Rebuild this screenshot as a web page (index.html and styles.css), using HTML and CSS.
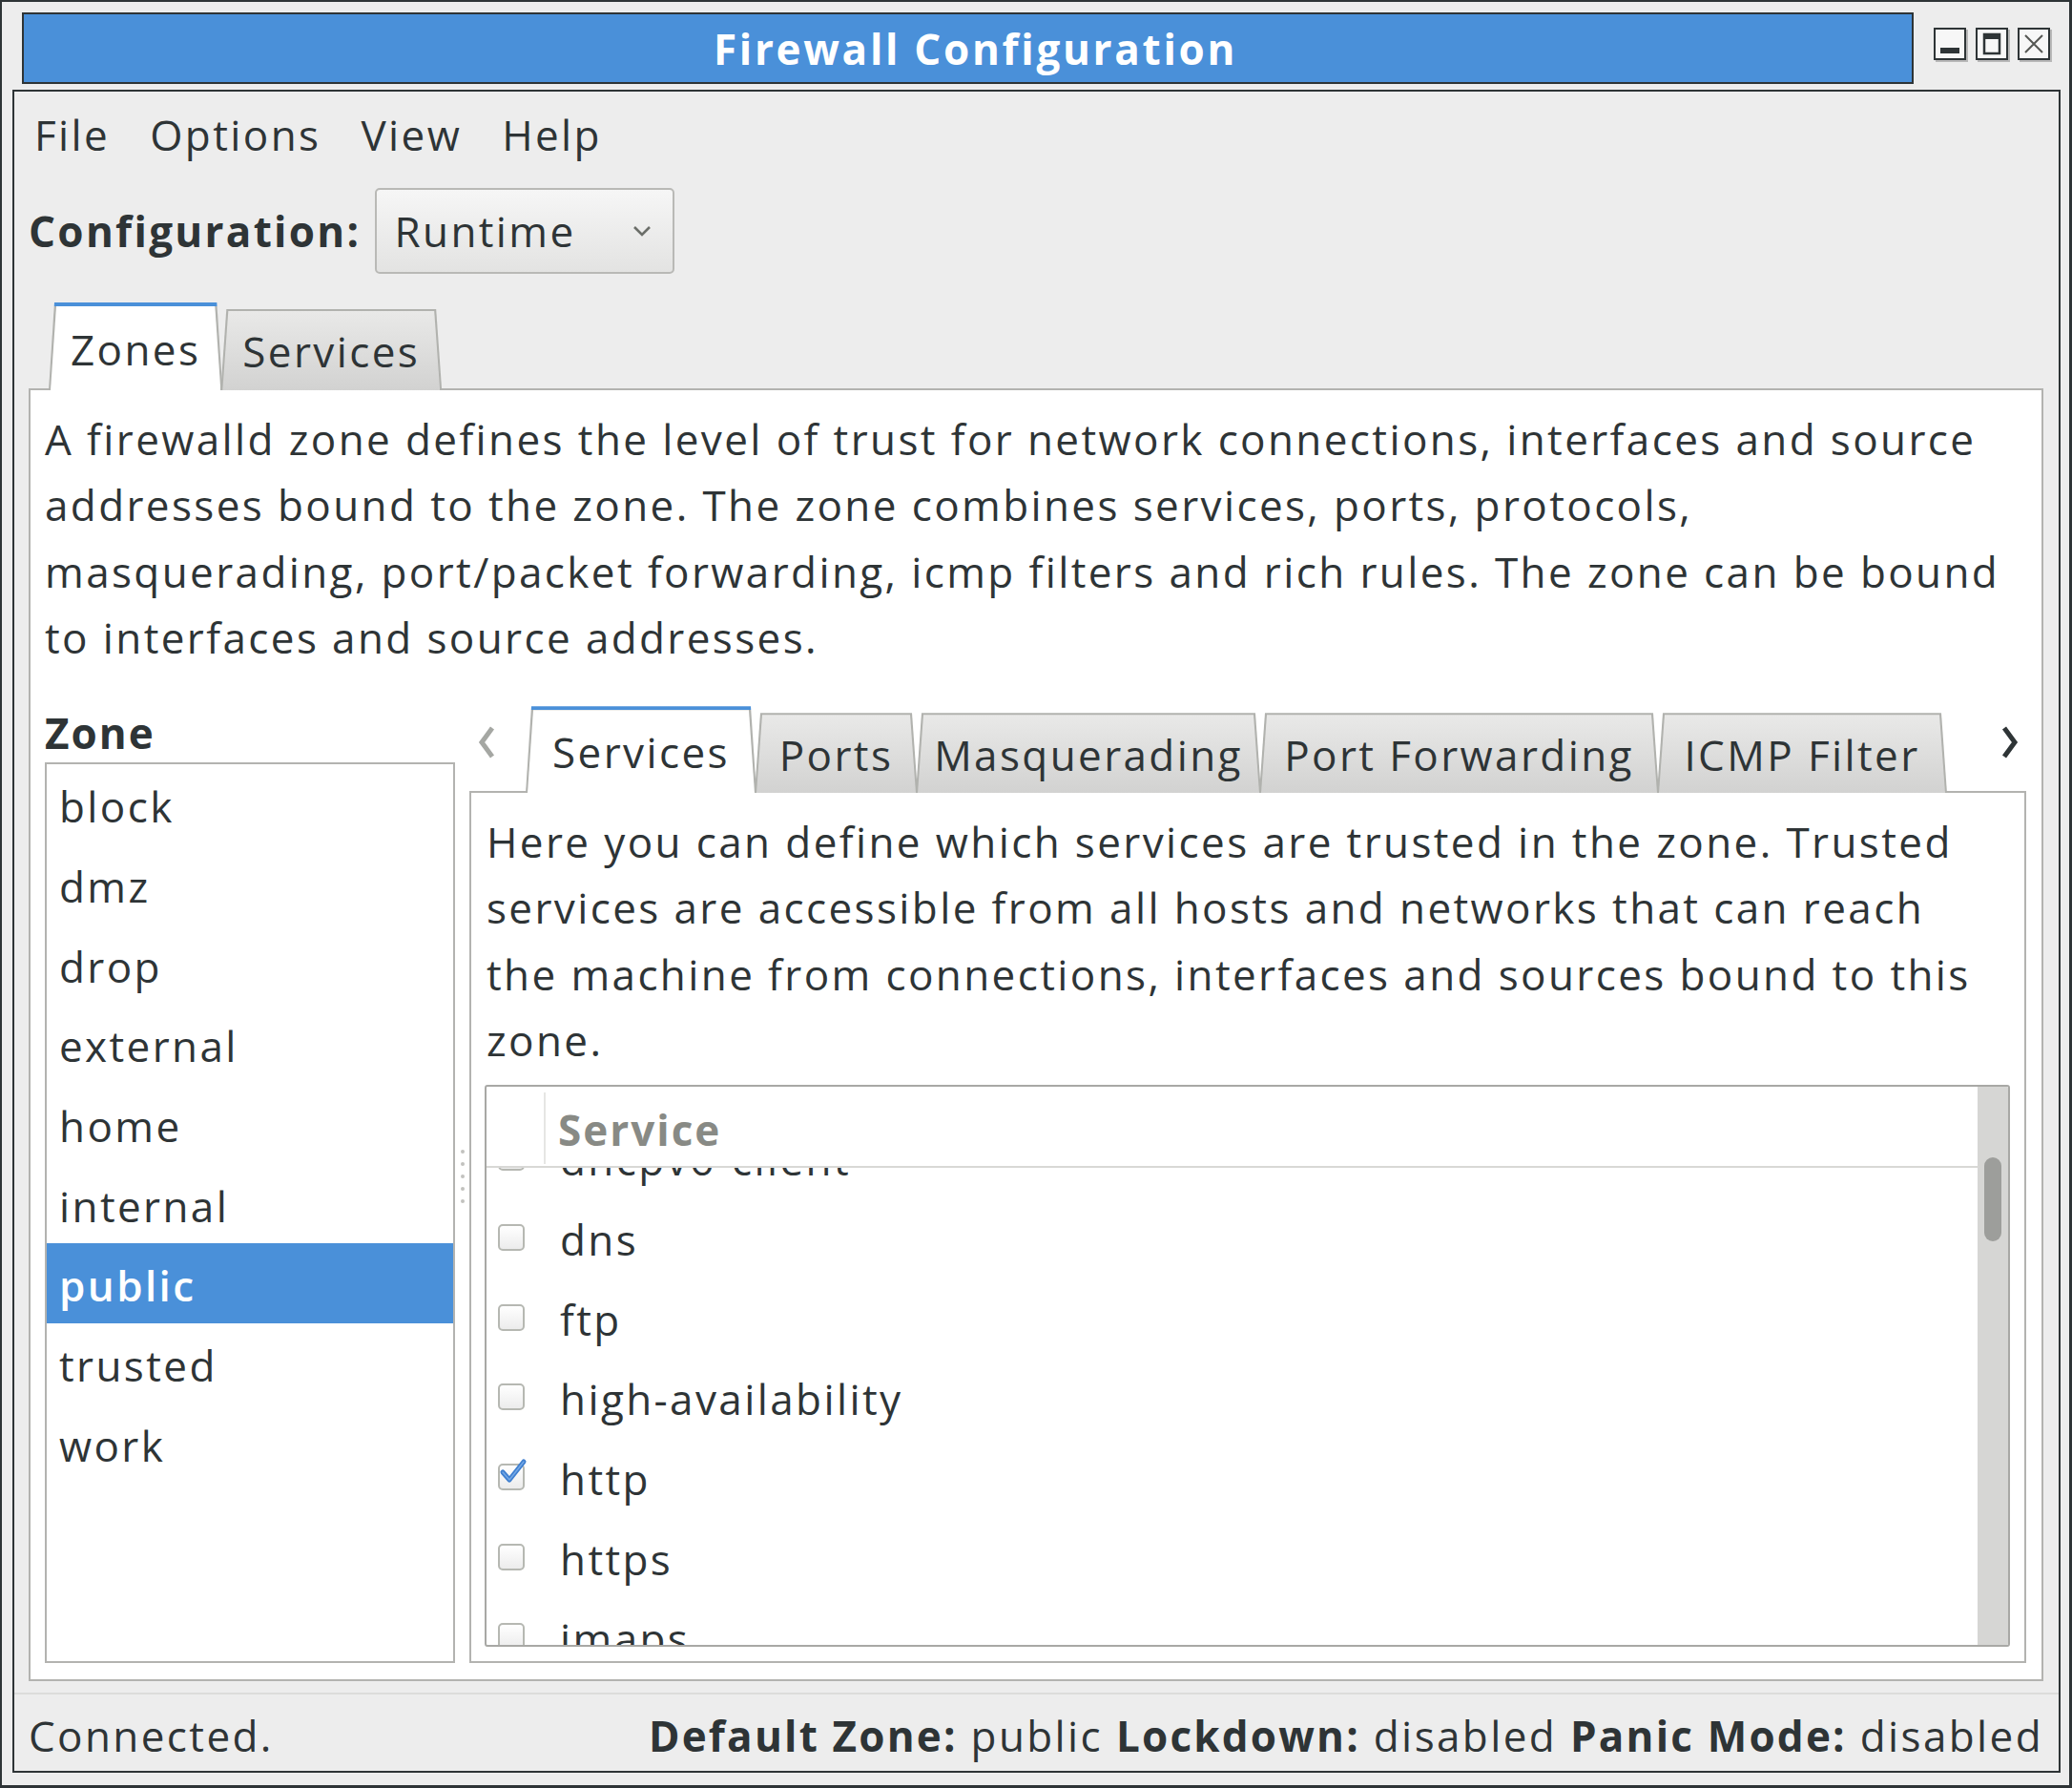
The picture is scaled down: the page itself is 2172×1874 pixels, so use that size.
FILE: index.html
```html
<!DOCTYPE html>
<html>
<head>
<meta charset="utf-8">
<title>Firewall Configuration</title>
<link rel="stylesheet" href="styles.css">
</head>
<body>
<div class="screen">
  <div class="titlerow">
    <div class="titlebar">Firewall Configuration</div>
    <div class="wbtns">
      <div class="wbtn"><svg width="30" height="30" viewBox="0 0 30 30"><rect x="5" y="19" width="20" height="6" fill="#2e3436"/></svg></div>
      <div class="wbtn"><svg width="30" height="30" viewBox="0 0 30 30"><rect x="7" y="5" width="16" height="20" fill="none" stroke="#2e3436" stroke-width="2.5"/><rect x="7" y="5" width="16" height="5" fill="#2e3436"/></svg></div>
      <div class="wbtn"><svg width="30" height="30" viewBox="0 0 30 30"><path d="M6 6 L24 24 M24 6 L6 24" stroke="#555753" stroke-width="2" fill="none"/></svg></div>
    </div>
  </div>
  <div class="client">
    <div class="menubar">
      <span class="menuitem">File</span>
      <span class="menuitem">Options</span>
      <span class="menuitem">View</span>
      <span class="menuitem">Help</span>
    </div>
    <div class="configrow">
      <span class="cfglabel">Configuration:</span>
      <div class="combo">
        <span class="combotext">Runtime</span>
        <svg class="chev" width="24" height="16" viewBox="0 0 24 16"><path d="M4 4 L12 12 L20 4" fill="none" stroke="#6b6e69" stroke-width="2.6"/></svg>
      </div>
    </div>
    <div class="notebook">
      <div class="tabs">
        <div class="tab active">Zones</div>
        <div class="tab">Services</div>
      </div>
      <div class="page">
        <p class="desc">A firewalld zone defines the level of trust for network connections, interfaces and source<br>addresses bound to the zone. The zone combines services, ports, protocols,<br>masquerading, port/packet forwarding, icmp filters and rich rules. The zone can be bound<br>to interfaces and source addresses.</p>
        <div class="split">
          <div class="zonecol">
            <div class="zonelabel">Zone</div>
            <div class="zonelist">
              <div class="zitem">block</div>
              <div class="zitem">dmz</div>
              <div class="zitem">drop</div>
              <div class="zitem">external</div>
              <div class="zitem">home</div>
              <div class="zitem">internal</div>
              <div class="zitem selected">public</div>
              <div class="zitem">trusted</div>
              <div class="zitem">work</div>
            </div>
          </div>
          <div class="handle"><i></i><i></i><i></i><i></i><i></i></div>
          <div class="inner">
            <div class="itabs">
              <div class="arrow left"><svg width="26" height="44" viewBox="0 0 26 44"><path d="M19 7 L8 22 L19 37" fill="none" stroke="#a5a7a3" stroke-width="5"/></svg></div>
              <div class="tab active t-services">Services</div>
              <div class="tab t-ports">Ports</div>
              <div class="tab t-masq">Masquerading</div>
              <div class="tab t-pf">Port Forwarding</div>
              <div class="tab t-icmp">ICMP Filter</div>
              <div class="arrow right"><svg width="26" height="44" viewBox="0 0 26 44"><path d="M7 7 L18 22 L7 37" fill="none" stroke="#2e3436" stroke-width="5"/></svg></div>
            </div>
            <div class="ipage">
              <p class="desc2">Here you can define which services are trusted in the zone. Trusted<br>services are accessible from all hosts and networks that can reach<br>the machine from connections, interfaces and sources bound to this<br>zone.</p>
              <div class="tree">
                <div class="treemain">
                  <div class="thead">
                    <div class="thcheck"></div>
                    <div class="thname">Service</div>
                  </div>
                  <div class="tbody">
                    <div class="rows">
                      <div class="row"><span class="cb"></span><span class="rname">dhcpv6-client</span></div>
                      <div class="row"><span class="cb"></span><span class="rname">dns</span></div>
                      <div class="row"><span class="cb"></span><span class="rname">ftp</span></div>
                      <div class="row"><span class="cb"></span><span class="rname">high-availability</span></div>
                      <div class="row"><span class="cb checked"><svg width="34" height="32" viewBox="0 0 34 32"><path d="M4 16 L11 24 L26 5" fill="none" stroke="#3f7fcf" stroke-width="5" stroke-linecap="round" stroke-linejoin="round"/><path d="M4 16 L11 24 L26 5" fill="none" stroke="#74a8e6" stroke-width="1.5" stroke-linecap="round" stroke-linejoin="round"/></svg></span><span class="rname">http</span></div>
                      <div class="row"><span class="cb"></span><span class="rname">https</span></div>
                      <div class="row"><span class="cb"></span><span class="rname">imaps</span></div>
                    </div>
                  </div>
                </div>
                <div class="vscroll"><div class="thumb"></div></div>
              </div>
            </div>
          </div>
        </div>
      </div>
    </div>
    <div class="statusbar">
      <span class="connected">Connected.</span>
      <span class="stinfo"><b>Default Zone:</b> public <b>Lockdown:</b> disabled <b>Panic Mode:</b> disabled</span>
    </div>
  </div>
</div>
</body>
</html>
```

FILE: styles.css
```css
* { box-sizing: border-box; }
html, body { margin: 0; padding: 0; }
body {
  font-family: "Open Sans", "Noto Sans", sans-serif;
  font-size: 44px;
  letter-spacing: 2.4px;
  color: #2e3436;
  background: #ededed;
}
b { font-weight: 700; }
.screen {
  width: 2172px;
  height: 1874px;
  border-top: 2px solid #2e3436;
  border-left: 2px solid #2e3436;
  border-right: 3px solid #2e3436;
  border-bottom: 3px solid #2e3436;
  background: #ededed;
  display: flex;
  flex-direction: column;
  overflow: hidden;
}
.titlerow {
  display: flex;
  margin-top: 11px;
  padding-left: 21px;
  height: 75px;
  flex: none;
}
.titlebar {
  width: 1983px;
  height: 75px;
  background: #4a90d9;
  border: 2px solid #2e3436;
  color: #ffffff;
  font-weight: 700;
  letter-spacing: 2.7px;
  display: flex;
  align-items: center;
  justify-content: center;
  line-height: 1;
  padding-left: 16px;
}
.wbtns {
  display: flex;
  gap: 10px;
  margin-left: 21px;
  margin-top: 16px;
}
.wbtn {
  width: 34px;
  height: 34px;
  border: 2px solid #2e3436;
  background: #f7f7f7;
  box-shadow: 2px 2px 0 #b8b8b8;
  display: flex;
  align-items: center;
  justify-content: center;
}
.client {
  margin-top: 6px;
  margin-left: 11px;
  width: 2147px;
  height: 1764px;
  border: 2px solid #2e3436;
  background: #ededed;
  display: flex;
  flex-direction: column;
  flex: none;
}
.menubar {
  height: 90px;
  display: flex;
  align-items: center;
  flex: none;
}
.menuitem {
  padding: 0 21px;
  line-height: 1;
}
.configrow {
  margin-top: 11px;
  height: 90px;
  display: flex;
  align-items: center;
  padding-left: 15px;
  flex: none;
}
.cfglabel {
  font-weight: 700;
  margin-right: 15px;
  letter-spacing: 2.3px;
}
.combo {
  width: 314px;
  height: 90px;
  border: 2px solid #b9b9b6;
  border-radius: 5px;
  background: linear-gradient(#f6f6f6, #e3e3e2);
  display: flex;
  align-items: center;
  padding-left: 18px;
}
.combotext { flex: 1; }
.chev { margin-right: 20px; }
.notebook {
  margin: 30px 16px 0 15px;
  display: flex;
  flex-direction: column;
  flex: none;
}
.tabs {
  display: flex;
  align-items: flex-end;
  padding-left: 21px;
  height: 92px;
  margin-bottom: -2px;
  position: relative;
  z-index: 1;
}
/* trapezoid notebook tabs */
.tab {
  position: relative;
  isolation: isolate;
  height: 85px;
  padding: 3px 23px 0 23px;
  display: flex;
  align-items: center;
  justify-content: center;
  flex: none;
}
.tab::before,
.tab::after {
  content: "";
  position: absolute;
  z-index: -1;
  clip-path: polygon(6px 0, calc(100% - 6px) 0, 100% 100%, 0 100%);
}
.tab::before {
  inset: 0;
  background: #b1b2ae;
}
.tab::after {
  inset: 2px 2px 0 2px;
  background: linear-gradient(#e9e9e8, #d2d2d1);
}
.tab + .tab { margin-left: -2px; }
.tab.active {
  height: 92px;
  padding-top: 5px;
  z-index: 2;
}
.tab.active::before {
  background: linear-gradient(#4a90d9 0, #4a90d9 4px, #b1b2ae 4px);
}
.tab.active::after {
  inset: 4px 2px 0 2px;
  background: #ffffff;
}
.page {
  height: 1355px;
  min-height: 0;
  background: #ffffff;
  border: 2px solid #b3b3b0;
  padding: 17px 16px 17px 15px;
  display: flex;
  flex-direction: column;
}
.desc {
  margin: 0;
  line-height: 69.3px;
  white-space: nowrap;
}
.split {
  margin-top: 33px;
  display: flex;
  flex: 1;
  min-height: 0;
}
.zonecol {
  width: 430px;
  display: flex;
  flex-direction: column;
  min-height: 0;
}
.zonelabel {
  height: 60px;
  line-height: 60px;
  font-weight: 700;
  letter-spacing: 2px;
  padding-top: 2px;
}
.zonelist {
  margin-top: 3px;
  flex: 1;
  min-height: 0;
  overflow: hidden;
  border: 2px solid #b3b3b0;
  background: #ffffff;
}
.zitem {
  height: 83.7px;
  padding: 5px 0 0 13px;
  line-height: 78.7px;
}
.zitem.selected {
  background: #4a90d9;
  color: #ffffff;
  font-weight: 600;
}
.handle {
  width: 15px;
  display: flex;
  flex-direction: column;
  align-items: center;
  padding-top: 469px;
  gap: 9px;
}
.handle i {
  display: block;
  width: 4px;
  height: 4px;
  border-radius: 2px;
  background: #c2c2bf;
}
.inner {
  flex: 1;
  display: flex;
  flex-direction: column;
  padding-top: 4px;
  min-height: 0;
  min-width: 0;
}
.itabs {
  height: 91px;
  display: flex;
  align-items: flex-end;
  margin-bottom: -2px;
  position: relative;
  z-index: 1;
  flex: none;
}
.itabs .tab { height: 84px; padding: 3px 0 0 0; }
.itabs .tab.active { height: 91px; padding-top: 5px; }
.arrow {
  height: 91px;
  display: flex;
  align-items: center;
  padding-bottom: 16px;
}
.arrow.left { width: 59px; padding-left: 5px; }
.arrow.right { flex: 1; justify-content: flex-end; padding-right: 4px; }
.t-services { width: 242px; }
.t-ports { width: 171px; }
.t-masq { width: 362px; }
.t-pf { width: 419px; }
.t-icmp { width: 304px; }
.ipage {
  flex: 1;
  min-height: 0;
  background: #ffffff;
  border: 2px solid #b3b3b0;
  padding: 17px 15px 15px 14px;
  display: flex;
  flex-direction: column;
}
.desc2 {
  margin: 0 0 12px 2px;
  line-height: 69.3px;
  white-space: nowrap;
  flex: none;
}
.tree {
  flex: 1;
  min-height: 0;
  display: flex;
  border: 2px solid #a8a8a5;
  border-radius: 3px;
  overflow: hidden;
}
.treemain {
  flex: 1;
  min-height: 0;
  display: flex;
  flex-direction: column;
}
.thead {
  height: 85px;
  display: flex;
  border-bottom: 2px solid #d8d8d6;
  flex: none;
}
.thcheck {
  width: 62px;
  border-right: 2px solid #e6e6e4;
  margin: 6px 0 2px 0;
}
.thname {
  padding: 6px 0 0 13px;
  display: flex;
  align-items: center;
  font-weight: 700;
  color: #888a85;
  letter-spacing: 2px;
}
.tbody {
  flex: 1;
  min-height: 0;
  overflow: hidden;
}
.rows { margin-top: -53px; }
.row {
  height: 83.7px;
  display: flex;
  align-items: center;
}
.cb {
  width: 28px;
  height: 28px;
  margin-left: 12px;
  margin-right: 37px;
  border: 2px solid #b6b8b2;
  border-radius: 5px;
  background: linear-gradient(#ffffff, #ececec);
  position: relative;
  flex: none;
}
.cb.checked svg {
  position: absolute;
  left: -1px;
  top: -9px;
}
.rname { line-height: 1; padding-top: 4px; }
.vscroll {
  width: 32px;
  background: #d6d6d4;
  padding: 74px 7px 0 7px;
  flex: none;
}
.thumb {
  width: 18px;
  height: 88px;
  border-radius: 9px;
  background: #9d9e9b;
}
.statusbar {
  margin-top: 12px;
  border-top: 2px solid #dcdcda;
  flex: 1;
  display: flex;
  align-items: center;
  justify-content: space-between;
  padding: 6px 16px 0 15px;
}
.stinfo b { letter-spacing: 2.2px; }
```
